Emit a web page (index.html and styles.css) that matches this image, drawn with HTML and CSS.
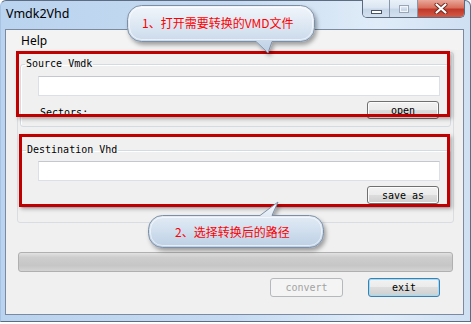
FILE: index.html
```html
<!DOCTYPE html>
<html lang="zh-CN">
<head>
    <meta charset="UTF-8">
    <title>Vmdk2Vhd</title>
    <link rel="stylesheet" href="styles.css">
</head>
<body>

<div class="screen">
    <div class="window">
        <div class="titlebar">
            <span class="title">Vmdk2Vhd</span>
            <div class="caption-btns">
                <span class="cap cap-min"><i></i></span>
                <span class="cap cap-max"><i></i></span>
                <span class="cap cap-close">
                    <svg width="14" height="11" viewBox="0 0 14 11">
                        <path d="M2.5 1.5 L11.5 9.5 M11.5 1.5 L2.5 9.5" stroke="#6b2a22" stroke-width="4" stroke-linecap="round"/>
                        <path d="M2.5 1.5 L11.5 9.5 M11.5 1.5 L2.5 9.5" stroke="#fff" stroke-width="2.2" stroke-linecap="round"/>
                    </svg>
                </span>
            </div>
        </div>

        <div class="client">
            <div class="menubar"><span>Help</span></div>

            <div class="panel">
                <fieldset class="group group-src">
                    <legend>Source Vmdk</legend>
                    <input type="text" class="textbox">
                    <div class="row">
                        <span class="sectors">Sectors:</span>
                        <button type="button" class="btn">open</button>
                    </div>
                </fieldset>

                <fieldset class="group group-dst">
                    <legend>Destination Vhd</legend>
                    <input type="text" class="textbox">
                    <div class="row">
                        <span class="sectors"></span>
                        <button type="button" class="btn">save as</button>
                    </div>
                </fieldset>
            </div>

            <div class="progress"></div>

            <div class="actions">
                <button type="button" class="btn btn-convert" disabled>convert</button>
                <button type="button" class="btn btn-default">exit</button>
            </div>
        </div>
    </div>

    <!-- annotations drawn over the screenshot -->
    <div class="mark mark-1"></div>
    <div class="mark mark-2"></div>

    <div class="callout callout-1">
        <svg width="205" height="60" viewBox="0 0 205 60">
            <defs>
                <linearGradient id="bubbleFill" x1="0" y1="0" x2="0" y2="1">
                    <stop offset="0" stop-color="#f2f6fb"/>
                    <stop offset="0.5" stop-color="#d8e4f1"/>
                    <stop offset="1" stop-color="#bccfe5"/>
                </linearGradient>
                <filter id="bubbleShadow" x="-10%" y="-20%" width="120%" height="150%">
                    <feDropShadow dx="2" dy="3" stdDeviation="2" flood-color="#000" flood-opacity="0.35"/>
                </filter>
            </defs>
            <path d="M21.5 5.5 H180.5 A14 14 0 0 1 194.5 19.5 V27.5 A14 14 0 0 1 180.5 41.5 H152 L148 53 L136 41.5 H21.5 A14 14 0 0 1 7.5 27.5 V19.5 A14 14 0 0 1 21.5 5.5 Z"
                  fill="url(#bubbleFill)" stroke="#7d8fa5" filter="url(#bubbleShadow)"/>
            <rect x="9.5" y="7.5" width="183" height="32" rx="12" fill="none" stroke="#fff" stroke-opacity="0.6"/>
        </svg>
        <span class="callout-text">1、打开需要转换的VMD文件</span>
    </div>

    <div class="callout callout-2">
        <svg width="195" height="62" viewBox="0 0 195 62">
            <defs>
                <linearGradient id="bubbleFill2" x1="0" y1="0" x2="0" y2="1">
                    <stop offset="0" stop-color="#f2f6fb"/>
                    <stop offset="0.5" stop-color="#d8e4f1"/>
                    <stop offset="1" stop-color="#bccfe5"/>
                </linearGradient>
                <filter id="bubbleShadow2" x="-10%" y="-20%" width="120%" height="150%">
                    <feDropShadow dx="2" dy="3" stdDeviation="2" flood-color="#000" flood-opacity="0.35"/>
                </filter>
            </defs>
            <path d="M22.5 19.5 H120 L138 6 L132 19.5 H169.5 A14 14 0 0 1 183.5 33.5 V37.5 A14 14 0 0 1 169.5 51.5 H22.5 A14 14 0 0 1 8.5 37.5 V33.5 A14 14 0 0 1 22.5 19.5 Z"
                  fill="url(#bubbleFill2)" stroke="#7d8fa5" filter="url(#bubbleShadow2)"/>
            <rect x="10.5" y="21.5" width="171" height="28" rx="12" fill="none" stroke="#fff" stroke-opacity="0.6"/>
        </svg>
        <span class="callout-text">2、选择转换后的路径</span>
    </div>
</div>

</body>
</html>
```

FILE: styles.css
```css
body {
    margin: 0;
    background-color: #fff;
    font-family: 'Noto Sans', sans-serif;
}
.screen {
    position: relative;
    width: 471px;
    height: 324px;
    overflow: hidden;
}
.window {
    box-sizing: border-box;
    width: 471px;
    height: 322px;
    display: flex;
    flex-direction: column;
    padding: 0 6px 6px 4px;
    border: 1px solid #5d6c80;
    border-left-color: #a6c3e6;
    border-radius: 6px 6px 0 0;
    background: linear-gradient(to right, #bad3ee 0, #c6dbf2 50%, #e0ecf8 80%, #cfe0f3 100%);
}
.titlebar {
    height: 28px;
    display: flex;
    justify-content: space-between;
    align-items: flex-start;
    padding-left: 1px;
}
.title {
    font-size: 12.5px;
    color: #000;
    line-height: 16px;
    margin-top: 5px;
}
.caption-btns {
    display: flex;
    margin: -1px -1px 0 0;
    height: 18px;
    border: 1px solid #5b6a7e;
    border-top: none;
    border-radius: 0 0 5px 5px;
    overflow: hidden;
    box-sizing: border-box;
}
.cap {
    display: flex;
    align-items: center;
    justify-content: center;
    height: 17px;
    box-sizing: border-box;
}
.cap-min, .cap-max {
    background: linear-gradient(#e9f0f8 0, #dbe6f2 45%, #c7d6e8 55%, #d3e1ef 100%);
    border-right: 1px solid #8797ab;
}
.cap-min {
    width: 27px;
}
.cap-max {
    width: 28px;
}
.cap-min i {
    display: block;
    width: 9px;
    height: 2px;
    margin-top: 6px;
    background: #fff;
    border: 1px solid #4b5566;
}
.cap-max i {
    display: block;
    width: 8px;
    height: 6px;
    border: 1px solid #9aa6b5;
    box-shadow: inset 0 0 0 1px #f2f5f9;
}
.cap-close {
    width: 46px;
    background: linear-gradient(#e9a79a 0, #d8705c 45%, #c0392a 55%, #d35a46 100%);
}

.client {
    flex: 1;
    box-sizing: border-box;
    background-color: #f0f0f0;
    border: 1px solid #7b8aa0;
    display: flex;
    flex-direction: column;
}
.menubar {
    height: 20px;
    padding-left: 15px;
    font-size: 12px;
    line-height: 22px;
    color: #000;
    background-color: #f3f3f4;
}
.panel {
    margin: 2px 0 0 11px;
    width: 437px;
    box-sizing: border-box;
    border: 1px solid #d9dde2;
    border-radius: 3px;
    padding-bottom: 14px;
}
.group {
    margin: 0 2px 0 2px;
    padding: 0 0 7px 0;
    min-width: 0;
    border: 1px solid #d3dbe2;
    border-radius: 3px;
    box-shadow: inset 1px 1px 0 #fff;
}
.group-src {
    margin-top: 5px;
}
.group-dst {
    margin-top: 17px;
    padding-bottom: 3px;
}
.group legend {
    margin-left: 4px;
    padding: 0 1px;
    font-family: 'DejaVu Sans Mono', monospace;
    font-size: 10px;
    line-height: 12px;
    color: #000;
}
.group-dst legend {
    margin-left: 5px;
}
.textbox {
    display: block;
    box-sizing: border-box;
    width: 402px;
    height: 20px;
    margin: 6px 0 0 17px;
    padding: 0;
    background: #fff;
    border: 1px solid #dbdfe6;
    border-top-color: #c4c7ce;
}
.group-dst .textbox {
    margin-top: 5px;
}
.row {
    display: flex;
    align-items: flex-end;
    justify-content: space-between;
    width: 399px;
    margin: 5px 0 0 19px;
}
.sectors {
    font-family: 'DejaVu Sans Mono', monospace;
    font-size: 10px;
    line-height: 12px;
    color: #000;
}
.btn {
    box-sizing: border-box;
    width: 72px;
    height: 18px;
    padding: 0;
    font-family: 'DejaVu Sans Mono', monospace;
    font-size: 10px;
    color: #000;
    border: 1px solid #707070;
    border-radius: 3px;
    background: linear-gradient(#f2f2f2 0, #ebebeb 50%, #dddddd 50%, #cfcfcf 100%);
    box-shadow: inset 0 0 0 1px #fcfcfc;
}
.progress {
    margin: 29px 0 0 12px;
    width: 435px;
    height: 20px;
    box-sizing: border-box;
    border: 1px solid #b0b0b0;
    border-radius: 3px;
    background: linear-gradient(#e2e2e2 0, #cdcdcd 25%, #c6c6c6 70%, #d4d4d4 100%);
}
.actions {
    display: flex;
    justify-content: flex-end;
    gap: 25px;
    margin-top: 6px;
    padding-right: 23px;
}
.actions .btn {
    height: 19px;
}
.btn-convert {
    width: 73px;
    color: #a3a3a3;
    border-color: #b5b9bc;
    background: #f4f4f4;
    box-shadow: none;
}
.btn-default {
    border-color: #3c7fb1;
    box-shadow: inset 0 0 0 1px #9fdcf5;
}

.mark {
    position: absolute;
    box-sizing: border-box;
    border: 3px solid #c00000;
    box-shadow: 2px 2px 4px rgba(0, 0, 0, 0.3);
}
.mark-1 {
    left: 16px;
    top: 51px;
    width: 434px;
    height: 66px;
}
.mark-2 {
    left: 19px;
    top: 134px;
    width: 431px;
    height: 73px;
}
.callout {
    position: absolute;
}
.callout svg {
    display: block;
}
.callout-1 {
    left: 120px;
    top: 0;
}
.callout-2 {
    left: 140px;
    top: 196px;
}
.callout-text {
    position: absolute;
    font-family: 'Noto Sans CJK SC', sans-serif;
    font-size: 12px;
    line-height: 14px;
    color: #ff0000;
    white-space: nowrap;
}
.callout-1 .callout-text {
    left: 22px;
    top: 16px;
}
.callout-2 .callout-text {
    left: 35px;
    top: 29px;
}
```
